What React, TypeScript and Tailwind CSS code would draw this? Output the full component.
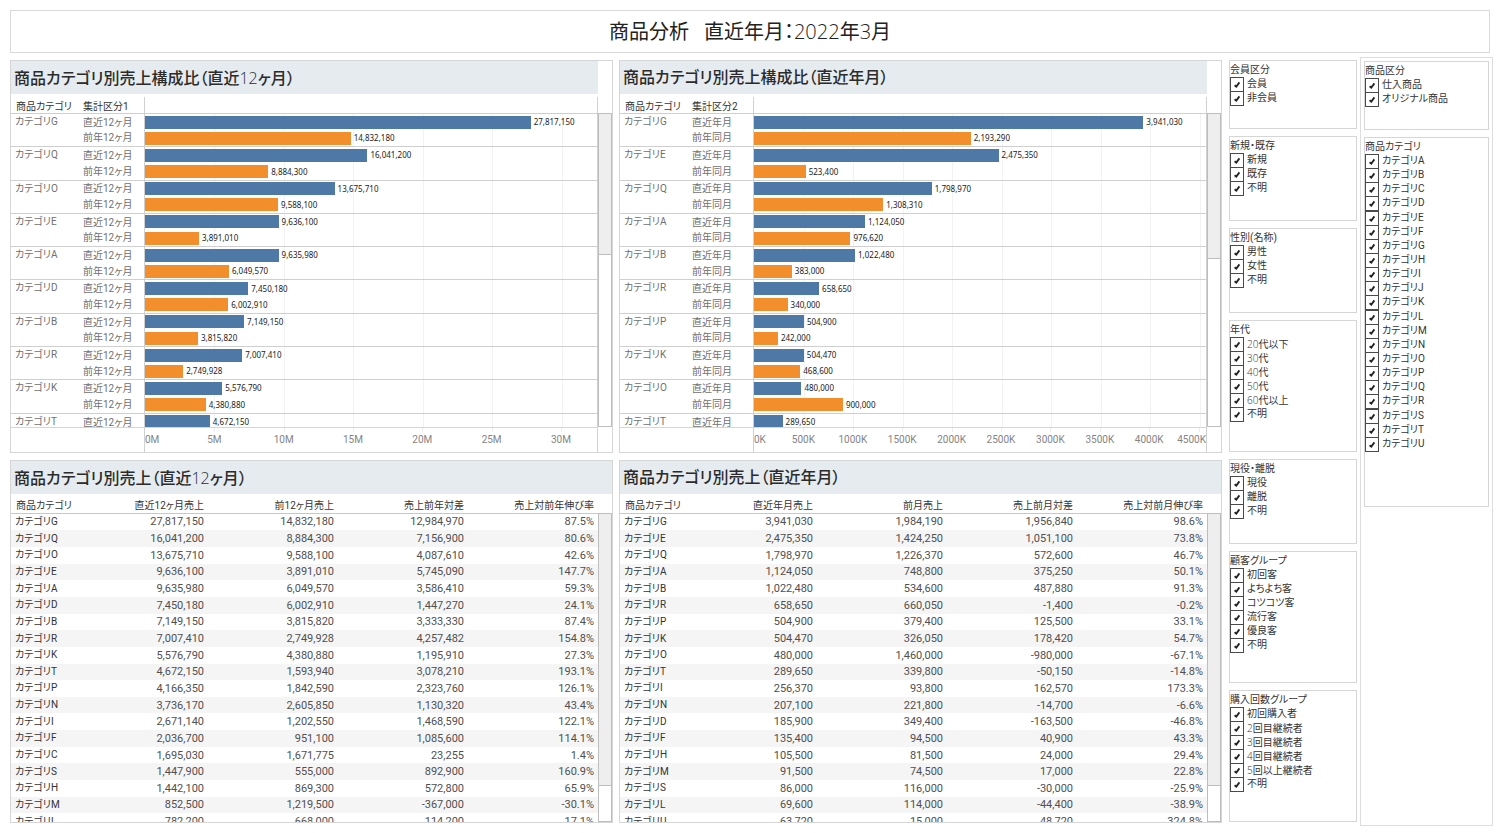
import React from "react";

type Pair = [category: string, current: number, previous: number | null];

interface ChartProps {
  title: string;
  segmentLabel: string;
  currentLabel: string;
  previousLabel: string;
  max: number;
  tickStep: number;
  ticks: string[];
  pairs: Pair[];
  thumbClass: string;
}

interface TableProps {
  title: string;
  headers: string[];
  rows: string[][];
}

const chartYear: Pair[] = [
  ["カテゴリG", 27817150, 14832180],
  ["カテゴリQ", 16041200, 8884300],
  ["カテゴリO", 13675710, 9588100],
  ["カテゴリE", 9636100, 3891010],
  ["カテゴリA", 9635980, 6049570],
  ["カテゴリD", 7450180, 6002910],
  ["カテゴリB", 7149150, 3815820],
  ["カテゴリR", 7007410, 2749928],
  ["カテゴリK", 5576790, 4380880],
  ["カテゴリT", 4672150, null],
];

const chartMonth: Pair[] = [
  ["カテゴリG", 3941030, 2193290],
  ["カテゴリE", 2475350, 523400],
  ["カテゴリQ", 1798970, 1308310],
  ["カテゴリA", 1124050, 976620],
  ["カテゴリB", 1022480, 383000],
  ["カテゴリR", 658650, 340000],
  ["カテゴリP", 504900, 242000],
  ["カテゴリK", 504470, 468600],
  ["カテゴリO", 480000, 900000],
  ["カテゴリT", 289650, null],
];

const tableYear = [
  "G 27,817,150 14,832,180 12,984,970 87.5%",
  "Q 16,041,200 8,884,300 7,156,900 80.6%",
  "O 13,675,710 9,588,100 4,087,610 42.6%",
  "E 9,636,100 3,891,010 5,745,090 147.7%",
  "A 9,635,980 6,049,570 3,586,410 59.3%",
  "D 7,450,180 6,002,910 1,447,270 24.1%",
  "B 7,149,150 3,815,820 3,333,330 87.4%",
  "R 7,007,410 2,749,928 4,257,482 154.8%",
  "K 5,576,790 4,380,880 1,195,910 27.3%",
  "T 4,672,150 1,593,940 3,078,210 193.1%",
  "P 4,166,350 1,842,590 2,323,760 126.1%",
  "N 3,736,170 2,605,850 1,130,320 43.4%",
  "I 2,671,140 1,202,550 1,468,590 122.1%",
  "F 2,036,700 951,100 1,085,600 114.1%",
  "C 1,695,030 1,671,775 23,255 1.4%",
  "S 1,447,900 555,000 892,900 160.9%",
  "H 1,442,100 869,300 572,800 65.9%",
  "M 852,500 1,219,500 -367,000 -30.1%",
  "L 782,200 668,000 114,200 17.1%",
].map((line) => line.split(" "));

const tableMonth = [
  "G 3,941,030 1,984,190 1,956,840 98.6%",
  "E 2,475,350 1,424,250 1,051,100 73.8%",
  "Q 1,798,970 1,226,370 572,600 46.7%",
  "A 1,124,050 748,800 375,250 50.1%",
  "B 1,022,480 534,600 487,880 91.3%",
  "R 658,650 660,050 -1,400 -0.2%",
  "P 504,900 379,400 125,500 33.1%",
  "K 504,470 326,050 178,420 54.7%",
  "O 480,000 1,460,000 -980,000 -67.1%",
  "T 289,650 339,800 -50,150 -14.8%",
  "I 256,370 93,800 162,570 173.3%",
  "N 207,100 221,800 -14,700 -6.6%",
  "D 185,900 349,400 -163,500 -46.8%",
  "F 135,400 94,500 40,900 43.3%",
  "H 105,500 81,500 24,000 29.4%",
  "M 91,500 74,500 17,000 22.8%",
  "S 86,000 116,000 -30,000 -25.9%",
  "L 69,600 114,000 -44,400 -38.9%",
  "U 63,720 15,000 48,720 324.8%",
].map((line) => line.split(" "));

const filters = [
  { title: "会員区分", size: "min-h-[69px]", items: ["会員", "非会員"] },
  { title: "新規・既存", size: "min-h-[85px]", items: ["新規", "既存", "不明"] },
  { title: "性別(名称)", size: "min-h-[85px]", items: ["男性", "女性", "不明"] },
  {
    title: "年代",
    size: "min-h-[132px]",
    items: ["20代以下", "30代", "40代", "50代", "60代以上", "不明"],
  },
  { title: "現役・離脱", size: "min-h-[85px]", items: ["現役", "離脱", "不明"] },
  {
    title: "顧客グループ",
    size: "min-h-[132px]",
    items: ["初回客", "よちよち客", "コツコツ客", "流行客", "優良客", "不明"],
  },
  {
    title: "購入回数グループ",
    size: "min-h-[132px]",
    items: ["初回購入者", "2回目継続者", "3回目継続者", "4回目継続者", "5回以上継続者", "不明"],
  },
];

const categories = "ABCDEFGHIJKLMNOPQRSTU".split("").map((c) => "カテゴリ" + c);

// Digits are set lighter than the kanji around them.
function LightDigits({ text }: { text: string }) {
  return (
    <>
      {text.split(/(\d+)/).map((part, i) =>
        /\d/.test(part) ? (
          <span key={i} className="font-['Open_Sans'] font-light">
            {part}
          </span>
        ) : (
          part
        ),
      )}
    </>
  );
}

function Scrollbar({ thumbClass }: { thumbClass: string }) {
  return (
    <div className="h-full w-[14px] border border-[#bdbdbd] bg-white">
      <div className={`border-b border-[#bdbdbd] bg-[#eeeeee] ${thumbClass}`} />
    </div>
  );
}

function Bar({ value, max, color }: { value: number; max: number; color: string }) {
  return (
    <div className="flex min-w-0 flex-1 items-center">
      <div className={`h-[13px] shrink-0 ${color}`} style={{ width: `${(value / max) * 100}%` }} />
      <span className="ml-[3px] font-['Noto_Sans'] text-[8px] leading-none text-[#222]">
        {value.toLocaleString("en-US")}
      </span>
    </div>
  );
}

function BarPanel(p: ChartProps) {
  return (
    <section className="border border-[#d6d6d6]">
      <h2 className="mr-[14px] flex h-[33px] items-center bg-[#e6ebef] pl-[3px] pt-px text-[16px] font-medium text-[#2b2b2b]">
        <span>
          <LightDigits text={p.title} />
        </span>
      </h2>
      <div className="mr-[14px] flex h-[19px] pt-[3px] text-[10px] leading-4 text-[#333]">
        <div className="w-[67px] pl-[5px] pt-[2px]">商品カテゴリ</div>
        <div className="w-[66px] pl-[5px] pt-[2px]">{p.segmentLabel}</div>
        <div className="flex-1 border-x border-[#d0d0d0]" />
      </div>
      <div className="flex h-[314px]">
        <div className="relative min-w-0 flex-1 overflow-hidden">
          <div className="absolute inset-y-0 left-[134px] right-0">
            {p.ticks.slice(1).map((tick, i) => (
              <div
                key={tick}
                className="absolute inset-y-0 w-px bg-[#f2f2f2]"
                style={{ left: `${(((i + 1) * p.tickStep) / p.max) * 100}%` }}
              />
            ))}
          </div>
          <div className="relative grid h-[333px] grid-cols-1 grid-rows-10">
            {p.pairs.map(([category, current, previous]) => (
              <div key={category} className="flex border-t border-[#cfcfcf] text-[10px] leading-none text-[#6f6f6f]">
                <div className="w-[67px] pl-[4px] pt-[3px]">{category}</div>
                <div className="flex w-[66px] flex-col pl-[5px] pt-px">
                  <div className="flex flex-1 items-center">
                    <span>{p.currentLabel}</span>
                  </div>
                  <div className="flex flex-1 items-center">
                    <span>{previous === null ? "" : p.previousLabel}</span>
                  </div>
                </div>
                <div className="flex min-w-0 flex-1 flex-col border-x border-[#d0d0d0]">
                  <Bar value={current} max={p.max} color="bg-[#4e79a7]" />
                  {previous === null ? (
                    <div className="flex-1" />
                  ) : (
                    <Bar value={previous} max={p.max} color="bg-[#f28e2b]" />
                  )}
                </div>
              </div>
            ))}
          </div>
        </div>
        <Scrollbar thumbClass={p.thumbClass} />
      </div>
      <div className="mr-[14px] flex h-[25px] border-t border-[#d6d6d6]">
        <div className="w-[133px]" />
        <div className="relative flex-1 border-x border-[#d0d0d0] text-[10px] leading-none text-[#848484]">
          {p.ticks.map((tick, i) => {
            const position = (i * p.tickStep) / p.max;
            const anchor = i === 0 ? "" : position > 0.97 ? "right-0" : "-translate-x-1/2";
            return (
              <React.Fragment key={tick}>
                {i > 0 && (
                  <div className="absolute top-0 h-1 w-px bg-[#ececec]" style={{ left: `${position * 100}%` }} />
                )}
                <span
                  className={`absolute top-[7px] ${anchor}`}
                  style={anchor === "right-0" ? undefined : { left: `${position * 100}%` }}
                >
                  {tick}
                </span>
              </React.Fragment>
            );
          })}
        </div>
      </div>
    </section>
  );
}

function TablePanel({ title, headers, rows }: TableProps) {
  return (
    <section className="border border-[#d6d6d6]">
      <h2 className="flex h-[33px] items-center bg-[#e6ebef] pl-[3px] pt-px text-[16px] font-medium text-[#2b2b2b]">
        <span>
          <LightDigits text={title} />
        </span>
      </h2>
      <div className="flex h-[328px]">
        <div className="min-w-0 flex-1 overflow-hidden">
          <table className="h-[336px] w-full table-fixed border-collapse whitespace-nowrap text-[10px] leading-none text-[#333]">
            <colgroup>
              <col />
              <col className="w-[130px]" />
              <col className="w-[130px]" />
              <col className="w-[130px]" />
              <col className="w-[130px]" />
            </colgroup>
            <thead>
              <tr className="h-[19px] border-b border-[#c8c8c8]">
                {headers.map((h, i) => (
                  <th
                    key={h}
                    scope="col"
                    className={`py-0 pt-[5px] font-normal ${i === 0 ? "pl-[5px] text-left" : "pr-1 text-right"}`}
                  >
                    {h}
                  </th>
                ))}
              </tr>
            </thead>
            <tbody>
              {rows.map((row) => (
                <tr key={row[0]} className="even:bg-[#f5f5f5]">
                  {row.map((cell, i) =>
                    i === 0 ? (
                      <th key={i} scope="row" className="p-0 pl-1 text-left font-normal">
                        {"カテゴリ" + cell}
                      </th>
                    ) : (
                      <td key={i} className="p-0 pr-1 text-right text-[11px] text-[#505050]">
                        {cell}
                      </td>
                    ),
                  )}
                </tr>
              ))}
            </tbody>
          </table>
        </div>
        <div className="pt-[19px]">
          <Scrollbar thumbClass="h-[272px]" />
        </div>
      </div>
    </section>
  );
}

function Check({ label }: { label: string }) {
  return (
    <label className="flex items-start gap-[3px]">
      <span className="relative h-[15px] w-[14px] shrink-0">
        <input
          type="checkbox"
          defaultChecked
          className="peer block h-[15px] w-[14px] appearance-none border border-[#4a4a4a] bg-white"
        />
        <svg
          viewBox="0 0 14 15"
          className="pointer-events-none absolute inset-0 hidden h-[15px] w-[14px] peer-checked:block"
        >
          <path d="M4.6 8.2 L6.3 9.6 L9.4 5.4" fill="none" stroke="#222" strokeWidth="1.8" />
        </svg>
      </span>
      <span className="whitespace-nowrap leading-[14px]">
        <LightDigits text={label} />
      </span>
    </label>
  );
}

function FilterBox({
  title,
  items,
  size,
  list = "auto-rows-[14px]",
}: {
  title: string;
  items: string[];
  size: string;
  list?: string;
}) {
  return (
    <fieldset className={`min-w-0 border border-[#d6d6d6] text-[10px] text-[#333] ${size}`}>
      <legend className="float-left w-full pt-px leading-[15px]">{title}</legend>
      <div className={`clear-both grid ${list}`}>
        {items.map((item) => (
          <Check key={item} label={item} />
        ))}
      </div>
    </fieldset>
  );
}

export default function App() {
  return (
    <div className="flex min-h-screen flex-col bg-white pb-[7px] pl-[10px] pr-[7px] pt-[10px] font-[Roboto,'Noto_Sans_CJK_JP',sans-serif] [font-feature-settings:'palt']">
      <header className="mr-[3px] flex h-[43px] items-center justify-center border border-[#d9d9d9]">
        <h1 className="flex gap-[15px] pt-px text-[20px] text-[#222]">
          <span>商品分析</span>
          <span>
            <LightDigits text="直近年月：2022年3月" />
          </span>
        </h1>
      </header>
      <main className="mt-1 flex flex-1">
        <div className="mt-[3px] grid min-w-0 flex-1 grid-cols-2 content-start gap-x-[6px] gap-y-[7px]">
          <BarPanel
            title="商品カテゴリ別売上構成比（直近12ヶ月）"
            segmentLabel="集計区分1"
            currentLabel="直近12ヶ月"
            previousLabel="前年12ヶ月"
            max={32600000}
            tickStep={5000000}
            ticks={["0M", "5M", "10M", "15M", "20M", "25M", "30M"]}
            pairs={chartYear}
            thumbClass="h-[141px]"
          />
          <BarPanel
            title="商品カテゴリ別売上構成比（直近年月）"
            segmentLabel="集計区分2"
            currentLabel="直近年月"
            previousLabel="前年同月"
            max={4575000}
            tickStep={500000}
            ticks={["0K", "500K", "1000K", "1500K", "2000K", "2500K", "3000K", "3500K", "4000K", "4500K"]}
            pairs={chartMonth}
            thumbClass="h-[145px]"
          />
          <TablePanel
            title="商品カテゴリ別売上（直近12ヶ月）"
            headers={["商品カテゴリ", "直近12ヶ月売上", "前12ヶ月売上", "売上前年対差", "売上対前年伸び率"]}
            rows={tableYear}
          />
          <TablePanel
            title="商品カテゴリ別売上（直近年月）"
            headers={["商品カテゴリ", "直近年月売上", "前月売上", "売上前月対差", "売上対前月伸び率"]}
            rows={tableMonth}
          />
        </div>
        <aside className="ml-[7px] mt-[3px] flex w-[128px] flex-col gap-[7px]">
          {filters.map((f) => (
            <FilterBox key={f.title} {...f} />
          ))}
        </aside>
        <aside className="ml-[3px] flex w-[133px] flex-col gap-[7px] border border-[#dddddd] p-[3px]">
          <FilterBox title="商品区分" items={["仕入商品", "オリジナル商品"]} size="min-h-[69px]" />
          <FilterBox
            title="商品カテゴリ"
            items={categories}
            size="min-h-[370px]"
            list="h-[297px] auto-rows-fr"
          />
        </aside>
      </main>
    </div>
  );
}
